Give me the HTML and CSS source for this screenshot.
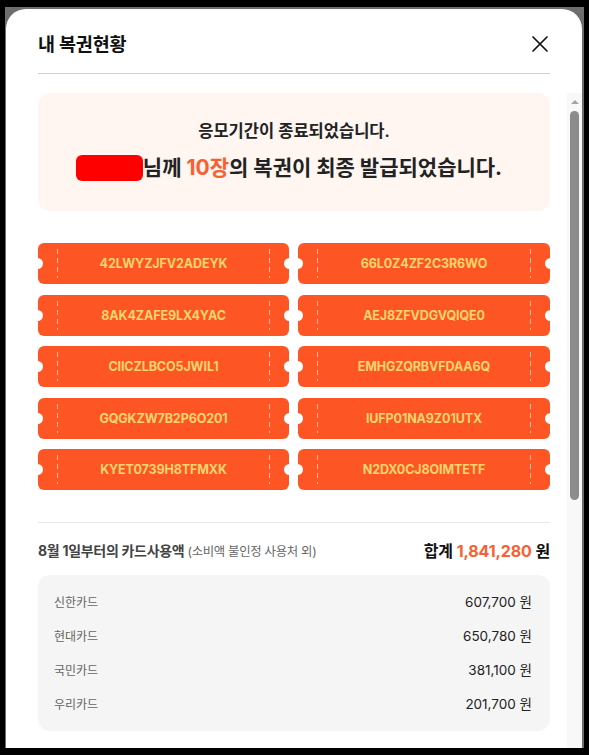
FILE: index.html
```html
<!DOCTYPE html>
<html lang="ko">
<head>
<meta charset="utf-8">
<title>내 복권현황</title>
<link rel="stylesheet" href="styles.css">
</head>
<body>
<div class="backdrop">
  <div class="modal">
    <header class="modal-header">
      <h2 class="title">내 복권현황</h2>
      <button class="close" aria-label="닫기">
        <svg width="18" height="18" viewBox="0 0 18 18"><path d="M2 2 L16 16 M16 2 L2 16" stroke="#111" stroke-width="1.7" fill="none" stroke-linecap="round"/></svg>
      </button>
    </header>
    <div class="modal-body">
      <div class="content">
        <section class="notice">
          <p class="notice-sub">응모기간이 종료되었습니다.</p>
          <p class="notice-main"><span class="redact"></span>님께 <em class="hl">10장</em>의 복권이 최종 발급되었습니다.</p>
        </section>
        <ul class="tickets">
          <li class="ticket">42LWYZJFV2ADEYK</li>
          <li class="ticket">66L0Z4ZF2C3R6WO</li>
          <li class="ticket">8AK4ZAFE9LX4YAC</li>
          <li class="ticket">AEJ8ZFVDGVQIQE0</li>
          <li class="ticket">CIICZLBCO5JWIL1</li>
          <li class="ticket">EMHGZQRBVFDAA6Q</li>
          <li class="ticket">GQGKZW7B2P6O201</li>
          <li class="ticket">IUFP01NA9Z01UTX</li>
          <li class="ticket">KYET0739H8TFMXK</li>
          <li class="ticket">N2DX0CJ8OIMTETF</li>
        </ul>
        <hr class="sep">
        <div class="summary">
          <p class="summary-label">8월 1일부터의 카드사용액 <span class="summary-note">(소비액 불인정 사용처 외)</span></p>
          <p class="summary-total">합계 <span class="hl">1,841,280</span> 원</p>
        </div>
        <ul class="cards">
          <li class="card-row"><span class="card-name">신한카드</span><span class="card-amt">607,700 원</span></li>
          <li class="card-row"><span class="card-name">현대카드</span><span class="card-amt">650,780 원</span></li>
          <li class="card-row"><span class="card-name">국민카드</span><span class="card-amt">381,100 원</span></li>
          <li class="card-row"><span class="card-name">우리카드</span><span class="card-amt">201,700 원</span></li>
        </ul>
      </div>
      <div class="scrollbar">
        <span class="scroll-arrow"></span>
        <span class="scroll-thumb"></span>
      </div>
    </div>
  </div>
</div>
</body>
</html>
```

FILE: styles.css
```css
* { box-sizing: border-box; }
html, body { margin: 0; padding: 0; }
body {
  background: #000;
  width: 589px;
  height: 755px;
  overflow: hidden;
  padding: 7px 5px 0 5px;
  font-family: "Inter", "Noto Sans CJK KR", sans-serif;
  color: #222;
}
.backdrop {
  background: #6e6e6e;
  height: 741px;
  padding: 2px 2px 0 1px;
}
.modal {
  background: #fff;
  height: 739px;
  border-radius: 20px 20px 0 0;
  overflow: hidden;
  display: flex;
  flex-direction: column;
}
.modal-header {
  margin: 0 32px;
  padding: 22px 0 16px;
  border-bottom: 1px solid #cfcfcf;
  display: flex;
  align-items: center;
  justify-content: space-between;
  height: 65px;
}
.title {
  margin: 0;
  font-size: 18.5px;
  font-weight: 700;
  line-height: 26px;
  color: #111;
  letter-spacing: -0.2px;
}
.close {
  border: 0;
  background: none;
  padding: 0;
  margin-right: 1px;
  width: 18px;
  height: 18px;
  display: flex;
}
.modal-body {
  margin-top: 19px;
  flex: 1;
  display: flex;
  overflow: hidden;
}
.content {
  margin-left: 32px;
  width: 512px;
  flex: none;
}
.notice {
  background: #fff5f1;
  border-radius: 12px;
  height: 118px;
  padding-top: 27px;
  padding-right: 10px;
  text-align: center;
}
.notice p { margin: 0; }
.notice-sub {
  font-size: 16.5px;
  font-weight: 600;
  line-height: 22px;
  color: #222;
  margin-left: 10px !important;
}
.notice-main {
  margin-top: 11px !important;
  font-size: 21px;
  font-weight: 700;
  line-height: 30px;
  color: #222;
}
.redact {
  display: inline-block;
  width: 67px;
  height: 26px;
  background: #f00;
  border-radius: 6px;
  vertical-align: -6px;
}
.hl {
  font-style: normal;
  color: #f8602f;
}
.tickets {
  list-style: none;
  margin: 32px 0 0;
  padding: 0;
  display: grid;
  grid-template-columns: 251px 252px;
  column-gap: 9px;
  row-gap: 10.5px;
}
.ticket {
  position: relative;
  height: 41px;
  border-radius: 6px;
  background:
    repeating-linear-gradient(to bottom, rgba(255,255,255,0.6) 0 5px, transparent 5px 9px) 19px 6px / 1px calc(100% - 12px) no-repeat,
    repeating-linear-gradient(to bottom, rgba(255,255,255,0.6) 0 5px, transparent 5px 9px) calc(100% - 19px) 6px / 1px calc(100% - 12px) no-repeat,
    #fd5524;
  display: flex;
  align-items: center;
  justify-content: center;
  color: #ffd56c;
  font-size: 12.5px;
  font-weight: 700;
  letter-spacing: -0.1px;
}
.ticket::before,
.ticket::after {
  content: "";
  position: absolute;
  top: 50%;
  width: 11px;
  height: 11px;
  margin-top: -5.5px;
  border-radius: 50%;
  background: #fff;
}
.ticket::before { left: -6px; }
.ticket::after { right: -6px; }
.sep {
  margin: 32px 0 0;
  border: 0;
  border-top: 1px solid #e8e8e8;
  height: 0;
}
.summary {
  margin-top: 16px;
  height: 22px;
  display: flex;
  align-items: center;
  justify-content: space-between;
}
.summary p { margin: 0; }
.summary-label {
  font-size: 14px;
  font-weight: 700;
  color: #444;
  letter-spacing: -0.3px;
}
.summary-note {
  font-size: 12.4px;
  font-weight: 400;
  color: #666;
}
.summary-total {
  font-size: 16px;
  font-weight: 700;
  color: #111;
  letter-spacing: -0.1px;
}
.cards {
  list-style: none;
  margin: 14px 0 0;
  padding: 16px 18px 18px 16px;
  background: #f5f5f5;
  border-radius: 12px;
  display: flex;
  flex-direction: column;
  gap: 14px;
}
.card-row {
  height: 20px;
  display: flex;
  align-items: center;
  justify-content: space-between;
}
.card-name {
  font-size: 12px;
  color: #666;
}
.card-amt {
  font-size: 13.5px;
  color: #222;
}
.scrollbar {
  margin-left: 17px;
  width: 15px;
  background: #f8f8f8;
  display: flex;
  flex-direction: column;
  align-items: flex-start;
  padding-top: 7px;
}
.scroll-arrow {
  margin-left: 3.5px;
  width: 0;
  height: 0;
  border-left: 4px solid transparent;
  border-right: 4px solid transparent;
  border-bottom: 4px solid #a3a3a3;
}
.scroll-thumb {
  margin: 7px 0 0 3px;
  width: 9px;
  height: 389px;
  border-radius: 5px;
  background: #8c8c8c;
}
```
